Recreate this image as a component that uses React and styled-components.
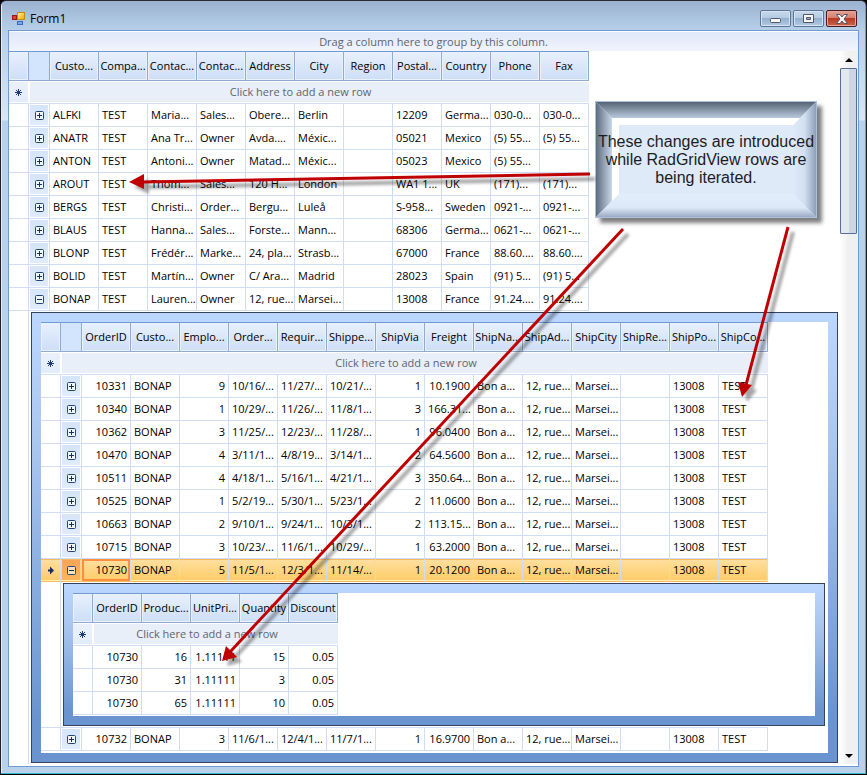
import React from 'react';
import styled, { createGlobalStyle, css } from 'styled-components';

const Global = createGlobalStyle`
  *, *::before, *::after { box-sizing: border-box; }
  body { margin: 0; background: #000; font: 12px/16px "Open Sans", "Noto Sans", sans-serif; color: #000; }
`;

const Window = styled.main`
  position: relative;
  width: 100%;
  padding: 0 7px 7px 7px;
  border: 1px solid #1d2026;
  border-top-color: #2b2b33;
  border-bottom-color: #000;
  border-radius: 6px 6px 0 0;
  background:
    linear-gradient(#35b6d0, #35b6d0) bottom / 100% 1px no-repeat,
    linear-gradient(#35b6d0, #35b6d0) right / 1px 100% no-repeat,
    linear-gradient(#e4eefa, #e4eefa) left / 1px 100% no-repeat,
    linear-gradient(#9ab2cf 0, #b7d0ea 30px, #d9e6f4 119px, #b9d1ea 120px);
`;

const TitleBar = styled.header`
  display: flex;
  align-items: center;
  height: 29px;
  padding: 6px 2px 0 4px;
  gap: 4px;
`;

const Title = styled.h1`
  flex: 1;
  margin: 0;
  font: 12px/16px "Open Sans", sans-serif;
`;

const Controls = styled.div`
  display: flex;
  gap: 2px;
`;

const ControlButton = styled.button`
  display: grid;
  place-items: center;
  width: 31px;
  height: 17px;
  padding: 0;
  border: 1px solid ${(p) => (p.$close ? '#4a1a22' : '#5d7595')};
  border-radius: 2px;
  box-shadow: inset 0 0 0 1px ${(p) => (p.$close ? '#e3a79c' : '#d5e3f2')};
  background: ${(p) =>
    p.$close
      ? 'linear-gradient(#e3a193 0 , #d6806f 45%, #b93a22 50%, #c9644a)'
      : 'linear-gradient(#c6d8eb 0, #b5cbe3 45%, #94b0d0 50%, #b2cae4)'};
`;

const Client = styled.div`
  border: 1px solid #6f9ad3;
  background: #fff;
`;

const GroupPanel = styled.div`
  height: 20px;
  border-top: 1px solid #fff;
  background: linear-gradient(#dfe9f8, #f0f4fd);
  color: #5f6470;
  font-size: 11px;
  line-height: 19px;
  text-align: center;
`;

const Scroller = styled.div`
  display: flex;
  padding-bottom: 2px;
`;

const GridArea = styled.section`
  flex: 1;
  min-width: 0;
`;

const Track = styled.div`
  display: flex;
  flex-direction: column;
  width: 18px;
  margin-left: 2px;
  padding-right: 1px;
  background: linear-gradient(90deg, #fff, #f0f0f0 8px);
`;

const ArrowButton = styled.button`
  display: grid;
  place-items: center;
  height: 17px;
  padding: 0;
  border: 0;
  background: none;
`;

const Thumb = styled.div`
  height: 166px;
  border: 1px solid #5a6c98;
  border-radius: 1px;
  background: linear-gradient(90deg, #e3e7ee 0 8px, #cdd7e3 8px);
`;

const Spacer = styled.div`
  flex: 1;
`;

const Table = styled.table`
  width: 100%;
  table-layout: fixed;
  border-collapse: separate;
  border-spacing: 0;
  font-size: 11px;
`;

const Col = styled.col`
  width: ${(p) => p.$w}px;
`;

const HeadCell = styled.th`
  height: 30px;
  padding: 0;
  overflow: hidden;
  border: 1px solid #8fabcf;
  border-width: 1px 1px 1px 0;
  border-top-color: #6f9ad3;
  background: ${(p) => (p.$plain ? '#d3e5fc' : 'linear-gradient(#e8f0fc, #cddef7)')};
  ${(p) => !p.$plain && css`box-shadow: inset 0 0 0 1px #e9f1fc;`}
  font-weight: 400;
  text-align: center;
  white-space: nowrap;
`;

const MarkCell = styled.td`
  height: 23px;
  padding: 0;
  border-right: 1px solid #fff;
  border-bottom: 1px solid #cfdef5;
  background: linear-gradient(#eaf1fb, #e2ecfa) 0 1px / 100% 20px no-repeat;
  text-align: center;
`;

const NewCell = styled.td`
  height: 23px;
  padding: 0 18px 0 0;
  border-bottom: 1px solid #cfdef5;
  border-left: 1px solid #fff;
  background: linear-gradient(#e8eff9, #e8eff9) 0 1px / 100% 20px no-repeat;
  color: #5f6470;
  text-align: center;
`;

const Cell = styled.td`
  height: ${(p) => (p.$afterDetail ? 24 : 23)}px;
  padding: 0 3px;
  overflow: hidden;
  border-right: 1px solid #cfdef5;
  border-bottom: 1px solid #cfdef5;
  ${(p) => p.$afterDetail && css`border-top: 1px solid #cfdef5;`}
  text-align: ${(p) => (p.$right ? 'right' : 'left')};
  white-space: nowrap;
  ${(p) => p.$selected && css`
    border-bottom-color: #f5bb62;
    background: linear-gradient(#fee0a0, #fecb68);
    box-shadow: inset 0 -1px #fff0b0, inset 0 1px #f8b860;
  `}
  ${(p) => p.$current && css`
    box-shadow: inset 0 0 0 2px #fb8f3f;
  `}
`;

const IconCell = styled(Cell)`
  padding: 0 1px;
  text-align: center;
`;

const Toggle = styled.button`
  display: grid;
  place-items: center;
  width: 100%;
  height: 20px;
  padding: 0;
  border: 0;
  background: ${(p) => (p.$selected ? 'linear-gradient(#f9a457, #fdb65c)' : 'linear-gradient(#d5e4f8, #e0ecfb)')};
`;

const DetailGutter = styled.td`
  padding: 0;
  border-right: 1px solid #cfdef5;
`;

const DetailCell = styled.td`
  padding: 1px ${(p) => p.$right}px 1px 2px;
  border: 0;
`;

const NestedPanel = styled.div`
  padding: 9px;
  border: 1px solid #36435f;
  background: linear-gradient(#bbd7fe, #a9c6ef 30%, #6a94d0 90%);
`;

const Inner = styled.div`
  padding-bottom: ${(p) => p.$tail}px;
  background: #fff;
`;

const Overlay = styled.svg`
  position: absolute;
  top: 0;
  left: 0;
  width: 867px;
  height: 500px;
  margin: -1px 0 0 -1px;
  overflow: visible;
  pointer-events: none;
`;

const Callout = styled.aside`
  position: absolute;
  top: 100px;
  left: 594px;
  display: grid;
  place-items: center;
  width: 222px;
  height: 117px;
  border: 1px solid #a9c0e0;
  background: #dfeaf8;
  box-shadow: 5px 5px 4px rgba(0, 0, 0, 0.5);
`;

const Bevel = styled.svg`
  grid-area: 1 / 1;
  width: 220px;
  height: 115px;
`;

const CalloutText = styled.p`
  grid-area: 1 / 1;
  z-index: 1;
  margin: 0;
  color: #1c1c24;
  font: 16px/18px "Liberation Sans", sans-serif;
  text-align: center;
  white-space: nowrap;
`;

const Glyph = styled.svg`
  display: block;
  margin: 0 auto;
`;

const FormIcon = () => (
  <Glyph width="14" height="14" viewBox="0 0 14 14">
    <defs>
      <linearGradient id="gold" x2="1" y2="1"><stop stopColor="#fff3b0" /><stop offset="1" stopColor="#eda400" /></linearGradient>
    </defs>
    <rect x="5.500" y=".5" width="7" height="7" fill="url(#gold)" stroke="#c98a10" />
    <rect x=".5" y="3.500" width="4" height="4" fill="#d8452a" stroke="#941c10" />
    <rect x="5.500" y="9.500" width="5" height="3" fill="#78a8f0" stroke="#3a68c4" />
  </Glyph>
);

const Expand = ({ open }) => (
  <Glyph width="9" height="9" viewBox="0 0 9 9">
    <rect x=".5" y=".5" width="8" height="8" rx="1" fill="#fff" fillOpacity=".6" stroke="#24447c" />
    <path d={open ? 'M2 4.500h5' : 'M2 4.500h5M4.500 2v5'} stroke="#1b2f5c" />
  </Glyph>
);

const Star = () => (
  <Glyph width="9" height="9" viewBox="0 0 9 9">
    <path d="M4.500 1v7M1 4.500h7M2 2l5 5M7 2L2 7" stroke="#1d3c74" />
  </Glyph>
);

const CurrentArrow = () => (
  <Glyph width="8" height="9" viewBox="0 0 8 9">
    <path d="M1 3.500h2V.5l4 4-4 4v-3H1z" fill="#14305c" />
  </Glyph>
);

const Grid = ({ label, columns, numeric = [], rows, expandable = true, current, openId, detailRight, detail }) => {
  const span = columns.length + 1 + (expandable ? 1 : 0);
  const openIndex = rows.findIndex((row) => openId !== undefined && row.split('|').includes(openId));
  return (
    <Table aria-label={label}>
      <colgroup>
        <Col $w={20} />
        {expandable && <Col $w={21} />}
        {columns.map((c, i) => <Col key={i} $w={49} />)}
        <col />
      </colgroup>
      <thead>
        <tr>
          <HeadCell />
          {expandable && <HeadCell $plain />}
          {columns.map((c, i) => <HeadCell key={i} scope="col">{c}</HeadCell>)}
          <td />
        </tr>
      </thead>
      <tbody>
        <tr>
          <MarkCell><Star /></MarkCell>
          <NewCell colSpan={span - 1}>Click here to add a new row</NewCell>
          <td />
        </tr>
        {rows.map((row, r) => {
          const cells = row.split('|');
          const open = r === openIndex;
          const afterDetail = openIndex >= 0 && r === openIndex + 1;
          const selected = current !== undefined && cells[0] === current;
          return (
            <React.Fragment key={r}>
              <tr>
                <IconCell $selected={selected} $afterDetail={afterDetail}>{selected && <CurrentArrow />}</IconCell>
                {expandable && (
                  <IconCell $selected={selected} $afterDetail={afterDetail}>
                    <Toggle $selected={selected} aria-label={open ? 'Collapse row' : 'Expand row'} aria-expanded={open}>
                      <Expand open={open} />
                    </Toggle>
                  </IconCell>
                )}
                {cells.map((c, i) => (
                  <Cell
                    key={i}
                    $right={numeric.includes(i)}
                    $selected={selected}
                    $current={selected && i === 0}
                    $afterDetail={afterDetail}
                  >
                    {c}
                  </Cell>
                ))}
                <td />
              </tr>
              {open && (
                <tr>
                  <DetailGutter />
                  <DetailCell colSpan={span} $right={detailRight}>
                    <NestedPanel>{detail}</NestedPanel>
                  </DetailCell>
                </tr>
              )}
            </React.Fragment>
          );
        })}
      </tbody>
    </Table>
  );
};

const customers = [
  'ALFKI|TEST|Maria...|Sales...|Obere...|Berlin||12209|Germa...|030-0...|030-0...',
  'ANATR|TEST|Ana Tr...|Owner|Avda....|Méxic...||05021|Mexico|(5) 55...|(5) 55...',
  'ANTON|TEST|Antoni...|Owner|Matad...|Méxic...||05023|Mexico|(5) 55...|',
  'AROUT|TEST|Thom...|Sales...|120 H...|London||WA1 1...|UK|(171)...|(171)...',
  'BERGS|TEST|Christi...|Order...|Bergu...|Luleå||S-958...|Sweden|0921-...|0921-...',
  'BLAUS|TEST|Hanna...|Sales...|Forste...|Mann...||68306|Germa...|0621-...|0621-...',
  'BLONP|TEST|Frédér...|Marke...|24, pla...|Strasb...||67000|France|88.60....|88.60....',
  'BOLID|TEST|Martín...|Owner|C/ Ara...|Madrid||28023|Spain|(91) 5...|(91) 5...',
  'BONAP|TEST|Lauren...|Owner|12, rue...|Marsei...||13008|France|91.24....|91.24....',
];

const shipping = 'Bon a...|12, rue...|Marsei...||13008|TEST';
const orders = [
  '10331|BONAP|9|10/16/...|11/27/...|10/21/...|1|10.1900',
  '10340|BONAP|1|10/29/...|11/26/...|11/8/1...|3|166.31...',
  '10362|BONAP|3|11/25/...|12/23/...|11/28/...|1|96.0400',
  '10470|BONAP|4|3/11/1...|4/8/19...|3/14/1...|2|64.5600',
  '10511|BONAP|4|4/18/1...|5/16/1...|4/21/1...|3|350.64...',
  '10525|BONAP|1|5/2/19...|5/30/1...|5/23/1...|2|11.0600',
  '10663|BONAP|2|9/10/1...|9/24/1...|10/3/1...|2|113.15...',
  '10715|BONAP|3|10/23/...|11/6/1...|10/29/...|1|63.2000',
  '10730|BONAP|5|11/5/1...|12/3/1...|11/14/...|1|20.1200',
  '10732|BONAP|3|11/6/1...|12/4/1...|11/7/1...|1|16.9700',
].map((row) => `${row}|${shipping}`);

const details = ['10730|16|1.11111|15|0.05', '10730|31|1.11111|3|0.05', '10730|65|1.11111|10|0.05'];

const arrows = [
  { line: 'M590 174L143 182', head: 'M129 182l15-8v15z' },
  { line: 'M623 229L230 652', head: 'M222 661l4-15 11 11z' },
  { line: 'M788 227L746 385', head: 'M742 397l-4-15 14 3z' },
];

export default function App() {
  return (
    <>
      <Global />
      <Window>
        <TitleBar>
          <FormIconHolder><FormIcon /></FormIconHolder>
          <Title>Form1</Title>
          <Controls>
            <ControlButton aria-label="Minimize">
              <Glyph width="13" height="13"><rect x="1.500" y="6.500" width="10" height="4" rx="1" fill="#f7f7f7" stroke="#535666" /></Glyph>
            </ControlButton>
            <ControlButton aria-label="Maximize">
              <Glyph width="11" height="9"><path d="M.5.5h10v8H.5zM3.500 3.500h4v2h-4z" fill="#f7f7f7" fillRule="evenodd" stroke="#535666" /></Glyph>
            </ControlButton>
            <ControlButton $close aria-label="Close">
              <Glyph width="12" height="10"><path d="M.5.5h3.500L6 3 8 .5h3.500L8 5l3.500 4.500H8L6 7 4 9.500H.5L4 5z" fill="#f7f7f7" stroke="#535666" /></Glyph>
            </ControlButton>
          </Controls>
        </TitleBar>
        <Client>
          <GroupPanel>Drag a column here to group by this column.</GroupPanel>
          <Scroller>
            <GridArea>
              <Grid
                label="Customers"
                columns={['Custo...', 'Compa...', 'Contac...', 'Contac...', 'Address', 'City', 'Region', 'Postal...', 'Country', 'Phone', 'Fax']}
                rows={customers}
                openId="BONAP"
                detailRight={0}
                detail={
                  <Inner $tail={2}>
                    <Grid
                      label="Orders"
                      columns={['OrderID', 'Custo...', 'Emplo...', 'Order...', 'Requir...', 'Shippe...', 'ShipVia', 'Freight', 'ShipNa...', 'ShipAd...', 'ShipCity', 'ShipRe...', 'ShipPo...', 'ShipCo...']}
                      numeric={[0, 2, 6, 7]}
                      rows={orders}
                      current="10730"
                      openId="10730"
                      detailRight={3}
                      detail={
                        <Inner $tail={1}>
                          <Grid
                            label="Order details"
                            columns={['OrderID', 'Produc...', 'UnitPri...', 'Quantity', 'Discount']}
                            numeric={[0, 1, 2, 3, 4]}
                            rows={details}
                            expandable={false}
                          />
                        </Inner>
                      }
                    />
                  </Inner>
                }
              />
            </GridArea>
            <Track>
              <ArrowButton aria-label="Scroll up"><Glyph width="8" height="4"><path d="M0 4l4-4 4 4z" /></Glyph></ArrowButton>
              <Thumb />
              <Spacer />
              <ArrowButton aria-label="Scroll down"><Glyph width="8" height="4"><path d="M0 0l4 4 4-4z" /></Glyph></ArrowButton>
            </Track>
          </Scroller>
        </Client>
        <Callout>
          <Bevel viewBox="0 0 220 115">
            <defs>
              <linearGradient id="bt" x2="0" y2="1"><stop stopColor="#566475" /><stop offset="1" stopColor="#b9c8dc" /></linearGradient>
              <linearGradient id="bl"><stop stopColor="#5d6b7d" /><stop offset="1" stopColor="#c9d7ea" /></linearGradient>
              <linearGradient id="br"><stop stopColor="#dfeaf8" /><stop offset=".5" stopColor="#d3e0f1" /><stop offset="1" stopColor="#8d9fb8" /></linearGradient>
              <linearGradient id="bb" x2="0" y2="1"><stop stopColor="#e3eefb" /><stop offset=".6" stopColor="#dce8f7" /><stop offset="1" stopColor="#9aabc3" /></linearGradient>
            </defs>
            <path d="M0 0h220l-16 16H16z" fill="url(#bt)" />
            <path d="M0 0l16 16v83L0 115z" fill="url(#bl)" />
            <path d="M220 0v115l-23-23V23z" fill="url(#br)" />
            <path d="M0 115l23-23h174l23 23z" fill="url(#bb)" />
            <path d="M16 16h188l-7 7H23v69l-7 7z" fill="#fff" />
          </Bevel>
          <CalloutText>These changes are introduced<br />while RadGridView rows are<br />being iterated.</CalloutText>
        </Callout>
        <Overlay viewBox="0 0 867 500" aria-hidden="true">
          <defs>
            <filter id="soft" x="-20%" y="-50%" width="140%" height="200%" filterUnits="objectBoundingBox"><feGaussianBlur stdDeviation="1.5" /></filter>
          </defs>
          {arrows.map((a) => (
            <g key={a.line}>
              <g transform="translate(5 5)" opacity=".35" filter="url(#soft)">
                <path d={a.line} stroke="#000" strokeWidth="4" />
                <path d={a.head} />
              </g>
              <path d={a.line} stroke="#c00000" strokeWidth="3" />
              <path d={a.head} fill="#c00000" />
            </g>
          ))}
        </Overlay>
      </Window>
    </>
  );
}

const FormIconHolder = styled.div`
  flex: none;
`;
